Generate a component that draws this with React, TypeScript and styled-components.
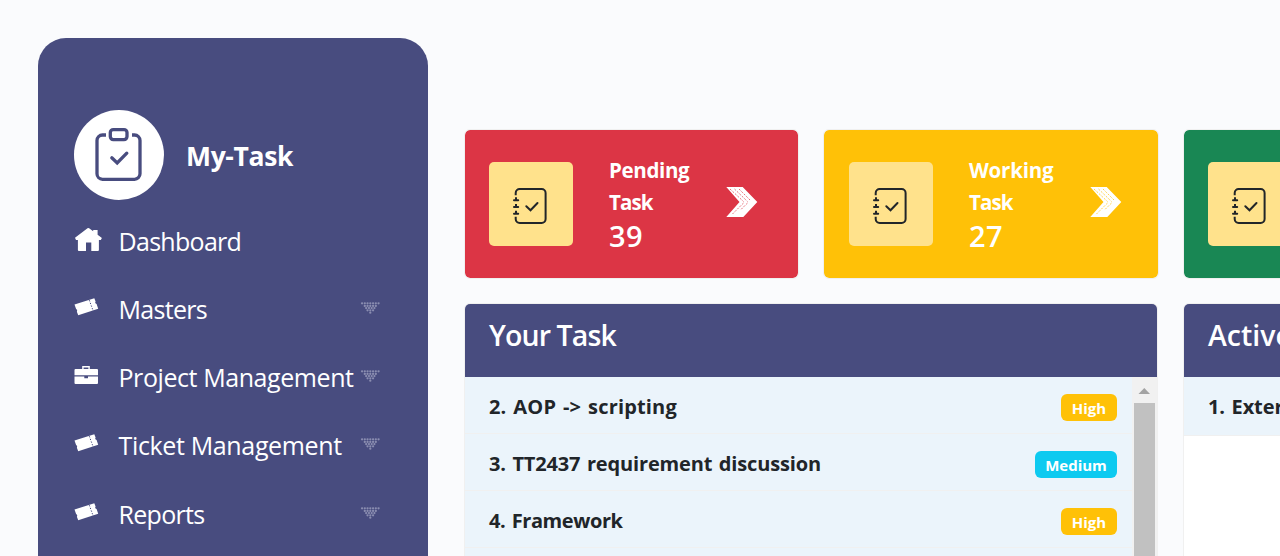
import React from "react";
import styled, { createGlobalStyle } from "styled-components";

const Global = createGlobalStyle`
  * { box-sizing: border-box; }
  html, body { margin: 0; height: 556px; overflow: hidden; background: #fafbfd; }
  body { font-family: "Segoe UI", "Open Sans", "Noto Sans", sans-serif; color: #212529; }
`;

const Page = styled.div`
  display: flex;
  align-items: flex-start;
  width: 1280px;
  height: 556px;
  overflow: hidden;
  background: #fafbfd;
`;

const Sidebar = styled.aside`
  flex: none;
  width: 390px;
  height: 600px;
  margin: 38px 0 0 38px;
  padding: 72px 36px 0;
  border-radius: 28px;
  background: #484c7f;
  color: #fff;
`;

const Brand = styled.div`
  display: flex;
  align-items: center;
  height: 90px;
`;

const BrandIcon = styled.span`
  display: flex;
  flex: none;
  width: 90px;
  height: 90px;
  margin-right: 22px;
  border-radius: 50%;
  background: #fff;
  color: #484c7f;
`;

const Label = styled.span<{ $ls?: number }>`
  white-space: nowrap;
  letter-spacing: ${(p) => p.$ls ?? 0}px;
`;

const BrandName = styled(Label)`
  font-size: 26.5px;
  font-weight: 700;
  line-height: 34px;
  padding-top: 1px;
`;

const Menu = styled.ul`
  list-style: none;
  margin: 8px 0 0;
  padding: 0;
`;

const MenuItem = styled.li`
  display: flex;
  align-items: center;
  height: 68px;
  font-size: 25px;

  &:last-child {
    height: 70px;
  }
`;

const MenuText = styled(Label)`
  margin-bottom: 2px;
`;

const MenuIcon = styled.span`
  display: flex;
  flex: none;
  width: 44.5px;
  height: 32px;
  margin-bottom: 6px;
`;

const Caret = styled.svg`
  margin: 0 12px 4px auto;
  flex: none;
`;

const Content = styled.main`
  flex: none;
  width: 1060px;
  margin: 129px 0 0 36px;
`;

const Cards = styled.div`
  display: flex;
  gap: 24px;
  margin-bottom: 24px;
`;

const Card = styled.section<{ $bg: string; $w: number; $start: number; $end: number }>`
  display: flex;
  flex: none;
  align-items: center;
  width: ${(p) => p.$w}px;
  height: 150px;
  padding: 0 ${(p) => p.$end}px 0 ${(p) => p.$start}px;
  border: 1px solid #f0f0f0;
  border-radius: 6px;
  background: ${(p) => p.$bg};
  background-clip: padding-box;
  color: #fff;
`;

const Tile = styled.div`
  display: flex;
  flex: none;
  width: 84px;
  height: 84px;
  margin-right: 36px;
  border-radius: 5px;
  background: #ffe28c;
  color: #212529;
`;

const CardText = styled.div`
  display: flex;
  flex-direction: column;
  width: 90px;
  padding-bottom: 1px;
`;

const CardTitle = styled(Label)`
  font-size: 20.5px;
  font-weight: 700;
  line-height: 32px;
`;

const CardCount = styled(Label)`
  font-size: 29px;
  font-weight: 600;
  line-height: 36px;
`;

const Arrow = styled.svg`
  flex: none;
  margin: 0 0 4px auto;
`;

const Panels = styled.div`
  display: flex;
  gap: 25px;
`;

const Panel = styled.section<{ $w: number }>`
  flex: none;
  width: ${(p) => p.$w}px;
  height: 300px;
  border: 1px solid #f0f0f0;
  border-radius: 6px;
  background: #fff;
  overflow: hidden;
`;

const PanelHeader = styled.header`
  height: 73px;
  padding: 12px 24px 0;
  background: #484c7f;
  color: #fff;
  font-size: 28.5px;
  font-weight: 600;
  line-height: 39px;
`;

const PanelBody = styled.div`
  display: flex;
`;

const List = styled.ul`
  flex: 1;
  list-style: none;
  margin: 0;
  padding: 0;
`;

const Row = styled.li<{ $h?: number }>`
  display: flex;
  align-items: center;
  justify-content: space-between;
  height: ${(p) => p.$h ?? 57}px;
  padding: 3px 15px ${(p) => (p.$h ?? 57) - 57}px 24px;
  border-bottom: 1px solid #f0f0f0;
  background: #ebf4fb;
  font-size: 20px;
  font-weight: 700;
  word-spacing: 1.5px;
`;

const Badge = styled.span<{ $bg: string; $w: number }>`
  display: flex;
  align-items: center;
  justify-content: center;
  width: ${(p) => p.$w}px;
  height: 27px;
  padding-top: 2px;
  margin-bottom: -1px;
  border-radius: 6px;
  background: ${(p) => p.$bg};
  color: #fff;
  font-size: 15px;
  font-weight: 700;
`;

const ScrollTrack = styled.div`
  display: flex;
  flex-direction: column;
  align-items: center;
  width: 25px;
  height: 230px;
  background: #f1f1f1;
`;

const ScrollUp = styled.svg`
  flex: none;
`;

const ScrollThumb = styled.div`
  flex: 1;
  width: 21px;
  background: #c1c1c1;
`;

const ClipboardIcon = () => (
  <svg width="90" height="90" viewBox="0 0 90 90" fill="none" stroke="currentColor" strokeWidth="3.3">
    <path d="M32 25H28.5a5.500 5.500 0 0 0-5.500 5.500V63.800a5.500 5.500 0 0 0 5.500 5.500H60.500a5.500 5.500 0 0 0 5.500-5.500V30.500a5.500 5.500 0 0 0-5.500-5.500H58" />
    <rect x="36.300" y="19.600" width="16.700" height="10" rx="3" />
    <path d="M37.800 47.800l5.400 5.200 9.600-9.800" strokeLinecap="round" />
  </svg>
);

const JournalIcon = () => (
  <svg width="84" height="84" viewBox="0 0 84 84" fill="none" stroke="currentColor" strokeWidth="2">
    <path d="M26.700 33.200V31a4 4 0 0 1 4-4H52.600a4 4 0 0 1 4 4V57a4 4 0 0 1-4 4H30.700a4 4 0 0 1-4-4V54.800" />
    <path d="M25 38.200h4.200M25 45h4.200M25 51.800h4.200" strokeLinecap="round" />
    <path d="M27 35.200v3M27 42v3M27 48.800v3" />
    <path d="M37.300 44.300l4.200 4 7-7.300" strokeLinecap="round" />
  </svg>
);

const HomeIcon = () => (
  <svg width="29" height="32" viewBox="0 -1 29 32" fill="currentColor">
    <path d="M1 13.800 13.500 4.200a1.400 1.400 0 0 1 1.600 0l4.100 3.100V6h4.400v4.700l4.300 3.300-1.100 2.100H24.900v9.900a1 1 0 0 1-1 1H17.300V18.500h-5.300V27H4.900a1 1 0 0 1-1-1V16.100H2z" />
  </svg>
);

const TicketIcon = () => (
  <svg width="26" height="32" viewBox="0 0 26 32">
    <path
      d="M.500 13.500 20.300 7.300l1.300 3.300a1.700 1.700 0 0 0 1 2.500l1.600 4.700L4.200 24.200 2.900 20.700a1.900 1.900 0 0 0-.8-2.600z"
      fill="currentColor"
    />
    <path d="M15.300 9.200l4 11" stroke="#484c7f" strokeWidth="1" strokeDasharray="1.300 1.500" />
  </svg>
);

const BriefcaseIcon = () => (
  <svg width="26" height="32" viewBox="0 -2 26 32">
    <path d="M8.900 8.500V5.700h6.200v2.800" fill="none" stroke="currentColor" strokeWidth="1.400" />
    <path d="M1.500 8H23a1 1 0 0 1 1 1v5.300H.5V9a1 1 0 0 1 1-1z" fill="currentColor" />
    <path d="M.500 15.600H10.300v1.700h3.700v-1.700H24V22a1 1 0 0 1-1 1H1.500a1 1 0 0 1-1-1z" fill="currentColor" />
  </svg>
);

const caretRows = [
  { y: 1.300, n: 7 },
  { y: 3.900, n: 5 },
  { y: 6.100, n: 4 },
  { y: 8.300, n: 3 },
  { y: 10.700, n: 1 },
];

const DottedCaret = () => (
  <Caret width="20" height="12" viewBox="0 0 20 12" fill="#8a8db0">
    {caretRows.map((r) =>
      Array.from({ length: r.n }, (_, i) => (
        <circle key={`${r.y}-${i}`} cx={10.3 + (i - (r.n - 1) / 2) * 2.75} cy={r.y} r="1.15" />
      ))
    )}
  </Caret>
);

const DoubleArrow = ({ hatch }: { hatch: string }) => (
  <Arrow width="32" height="32" viewBox="0 0 32 32">
    <path d="M.300 1H16.700L31.300 16 17.300 31H.300L13.500 16z" fill="#fff" />
    <g stroke={hatch} strokeWidth=".7" strokeDasharray="2 1.400" fill="none">
      <path d="M4 3l13.500 12.500M8.500 3l13 12.500M13 3l11.500 11.500" />
      <path d="M17.500 17 5.500 29M21.500 17 15 23.500" />
    </g>
  </Arrow>
);

const menu = [
  { label: "Dashboard", ls: -0.7, icon: <HomeIcon />, caret: false },
  { label: "Masters", ls: -0.7, icon: <TicketIcon />, caret: true },
  { label: "Project Management", ls: -0.42, icon: <BriefcaseIcon />, caret: true },
  { label: "Ticket Management", ls: -0.35, icon: <TicketIcon />, caret: true },
  { label: "Reports", ls: -0.7, icon: <TicketIcon />, caret: true },
];

const cards = [
  { title: "Pending", count: 39, bg: "#dc3545", ls: -0.35, w: 335, start: 24, end: 40 },
  { title: "Working", count: 27, bg: "#ffc107", ls: -0.2, w: 336, start: 25, end: 36 },
  { bg: "#198754", w: 335, start: 24, end: 40 },
];

const tasks = [
  { text: "2. AOP -> scripting", ls: 0.17, level: "High" },
  { text: "3. TT2437 requirement discussion", ls: -0.15, level: "Medium" },
  { text: "4. Framework", ls: -0.4, level: "High" },
];

const levels: Record<string, { bg: string; w: number }> = {
  High: { bg: "#ffc107", w: 56 },
  Medium: { bg: "#0dcaf0", w: 82 },
};

export default function App() {
  return (
    <Page>
      <Global />
      <Sidebar>
        <Brand>
          <BrandIcon>
            <ClipboardIcon />
          </BrandIcon>
          <BrandName $ls={-0.35}>My-Task</BrandName>
        </Brand>
        <Menu>
          {menu.map((m) => (
            <MenuItem key={m.label}>
              <MenuIcon>{m.icon}</MenuIcon>
              <MenuText $ls={m.ls}>{m.label}</MenuText>
              {m.caret && <DottedCaret />}
            </MenuItem>
          ))}
        </Menu>
      </Sidebar>
      <Content>
        <Cards>
          {cards.map((c) => (
            <Card key={c.bg} $bg={c.bg} $w={c.w} $start={c.start} $end={c.end}>
              <Tile>
                <JournalIcon />
              </Tile>
              {c.title && (
                <CardText>
                  <CardTitle $ls={c.ls}>{c.title}</CardTitle>
                  <CardTitle $ls={-0.9}>Task</CardTitle>
                  <CardCount $ls={0.3}>{c.count}</CardCount>
                </CardText>
              )}
              <DoubleArrow hatch={c.bg} />
            </Card>
          ))}
        </Cards>
        <Panels>
          <Panel $w={694}>
            <PanelHeader>
              <Label $ls={-0.9}>Your Task</Label>
            </PanelHeader>
            <PanelBody>
              <List>
                {tasks.map((t) => (
                  <Row key={t.text}>
                    <Label $ls={t.ls}>{t.text}</Label>
                    <Badge $bg={levels[t.level].bg} $w={levels[t.level].w}>
                      {t.level}
                    </Badge>
                  </Row>
                ))}
                <Row />
              </List>
              <ScrollTrack>
                <ScrollUp width="25" height="26" viewBox="0 0 25 26">
                  <path d="M6.500 17 12.300 11 18 17z" fill="#a3a3a3" />
                </ScrollUp>
                <ScrollThumb />
              </ScrollTrack>
            </PanelBody>
          </Panel>
          <Panel $w={334}>
            <PanelHeader>
              <Label $ls={0}>Active</Label>
            </PanelHeader>
            <PanelBody>
              <List>
                <Row $h={59}>
                  <Label $ls={-0.1}>1. External</Label>
                </Row>
              </List>
            </PanelBody>
          </Panel>
        </Panels>
      </Content>
    </Page>
  );
}
